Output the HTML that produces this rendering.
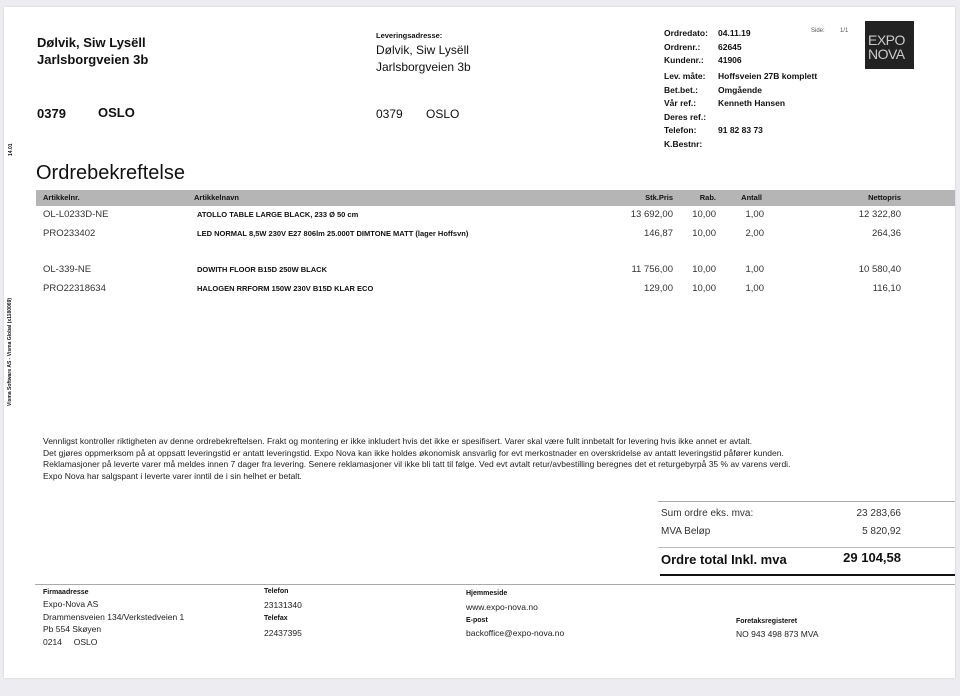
<!DOCTYPE html>
<html><head><meta charset="utf-8"><style>
*{margin:0;padding:0;box-sizing:border-box}
body{width:960px;height:696px;background:#ececf1;position:relative;overflow:hidden;font-family:"Liberation Sans",sans-serif;color:#111}
.pg{position:absolute;left:4px;top:7px;width:951px;height:671px;background:#fff;box-shadow:0 0 2px #ccc}
.t{position:absolute;white-space:nowrap;line-height:1}
.b{font-weight:bold}
.r{text-align:right}
.hl{position:absolute;height:1px;background:#999}
.n{position:absolute;white-space:nowrap;line-height:1;font-size:9.5px;color:#333;text-align:right}
</style></head><body>
<div class="pg"></div>
<div class="t b" style="left:37px;top:36px;font-size:13px">Dølvik, Siw Lysëll</div>
<div class="t b" style="left:37px;top:53px;font-size:13px">Jarlsborgveien 3b</div>
<div class="t b" style="left:37px;top:107px;font-size:13px">0379</div>
<div class="t b" style="left:98px;top:106px;font-size:13px">OSLO</div>
<div class="t b" style="left:376px;top:32px;font-size:7.5px">Leveringsadresse:</div>
<div class="t" style="left:376px;top:44px;font-size:12px">Dølvik, Siw Lysëll</div>
<div class="t" style="left:376px;top:61px;font-size:12px">Jarlsborgveien 3b</div>
<div class="t" style="left:376px;top:108px;font-size:12px">0379</div>
<div class="t" style="left:426px;top:108px;font-size:12px">OSLO</div>

<div class="t b" style="left:664px;top:27px;font-size:8.5px;line-height:13.5px">Ordredato:<br>Ordrenr.:<br>Kundenr.:</div>
<div class="t b" style="left:718px;top:27px;font-size:8.5px;line-height:13.5px">04.11.19<br>62645<br>41906</div>
<div class="t b" style="left:664px;top:70px;font-size:8.5px;line-height:13.5px">Lev. måte:<br>Bet.bet.:<br>Vår ref.:<br>Deres ref.:<br>Telefon:<br>K.Bestnr:</div>
<div class="t b" style="left:718px;top:70px;font-size:8.5px;line-height:13.5px">Hoffsveien 27B komplett<br>Omgående<br>Kenneth Hansen<br><br>91 82 83 73</div>
<div class="t" style="left:811px;top:28px;font-size:6px;color:#555">Side:</div>
<div class="t" style="left:840px;top:28px;font-size:6px;color:#555">1/1</div>
<div style="position:absolute;left:865px;top:21px;width:49px;height:48px;background:#222"></div>
<div class="t" style="left:868px;top:33px;font-size:14px;color:#ccc;letter-spacing:-0.5px;line-height:14px">EXPO<br>NOVA</div>

<div class="t b" style="left:9px;top:156px;font-size:5px;transform:rotate(-90deg);transform-origin:0 0">14.01</div>
<div class="t b" style="left:8px;top:406px;font-size:5px;transform:rotate(-90deg);transform-origin:0 0">Visma Software AS - Visma Global (x1180069)</div>

<div class="t" style="left:36px;top:163px;font-size:20px">Ordrebekreftelse</div>
<div style="position:absolute;left:36px;top:190px;width:919px;height:16px;background:#b5b5b5"></div>
<div class="t b" style="left:43px;top:194px;font-size:7.5px">Artikkelnr.</div>
<div class="t b" style="left:194px;top:194px;font-size:7.5px">Artikkelnavn</div>
<div class="t b r" style="left:573px;width:100px;top:194px;font-size:7.5px">Stk.Pris</div>
<div class="t b r" style="left:656px;width:60px;top:194px;font-size:7.5px">Rab.</div>
<div class="t b r" style="left:701px;width:61px;top:194px;font-size:7.5px">Antall</div>
<div class="t b r" style="left:801px;width:100px;top:194px;font-size:7.5px">Nettopris</div>

<div class="t" style="left:43px;top:210px;font-size:9.5px;color:#333">OL-L0233D-NE</div>
<div class="t b" style="left:197px;top:211px;font-size:7.5px">ATOLLO TABLE LARGE BLACK, 233 Ø 50 cm</div>
<div class="t" style="left:43px;top:229px;font-size:9.5px;color:#333">PRO233402</div>
<div class="t b" style="left:197px;top:230px;font-size:7.5px">LED NORMAL 8,5W 230V E27 806lm 25.000T DIMTONE MATT (lager Hoffsvn)</div>
<div class="t" style="left:43px;top:265px;font-size:9.5px;color:#333">OL-339-NE</div>
<div class="t b" style="left:197px;top:266px;font-size:7.5px">DOWITH FLOOR B15D 250W BLACK</div>
<div class="t" style="left:43px;top:284px;font-size:9.5px;color:#333">PRO22318634</div>
<div class="t b" style="left:197px;top:285px;font-size:7.5px">HALOGEN RRFORM 150W 230V B15D KLAR ECO</div>

<div class="n" style="left:573px;width:100px;top:210px">13 692,00</div>
<div class="n" style="left:656px;width:60px;top:210px">10,00</div>
<div class="n" style="left:704px;width:60px;top:210px">1,00</div>
<div class="n" style="left:801px;width:100px;top:210px">12 322,80</div>
<div class="n" style="left:573px;width:100px;top:229px">146,87</div>
<div class="n" style="left:656px;width:60px;top:229px">10,00</div>
<div class="n" style="left:704px;width:60px;top:229px">2,00</div>
<div class="n" style="left:801px;width:100px;top:229px">264,36</div>
<div class="n" style="left:573px;width:100px;top:265px">11 756,00</div>
<div class="n" style="left:656px;width:60px;top:265px">10,00</div>
<div class="n" style="left:704px;width:60px;top:265px">1,00</div>
<div class="n" style="left:801px;width:100px;top:265px">10 580,40</div>
<div class="n" style="left:573px;width:100px;top:284px">129,00</div>
<div class="n" style="left:656px;width:60px;top:284px">10,00</div>
<div class="n" style="left:704px;width:60px;top:284px">1,00</div>
<div class="n" style="left:801px;width:100px;top:284px">116,10</div>

<div class="t" style="left:43px;top:436px;font-size:8.5px;line-height:11.7px;color:#222">Vennligst kontroller riktigheten av denne ordrebekreftelsen. Frakt og montering er ikke inkludert hvis det ikke er spesifisert. Varer skal være fullt innbetalt for levering hvis ikke annet er avtalt.<br>Det gjøres oppmerksom på at oppsatt leveringstid er antatt leveringstid. Expo Nova kan ikke holdes økonomisk ansvarlig for evt merkostnader en overskridelse av antatt leveringstid påfører kunden.<br>Reklamasjoner på leverte varer må meldes innen 7 dager fra levering. Senere reklamasjoner vil ikke bli tatt til følge. Ved evt avtalt retur/avbestilling beregnes det et returgebyrpå 35 % av varens verdi.<br>Expo Nova har salgspant i leverte varer inntil de i sin helhet er betalt.</div>

<div class="hl" style="left:658px;top:501px;width:297px;background:#aaa"></div>
<div class="t" style="left:661px;top:509px;font-size:10px;color:#333">Sum ordre eks. mva:</div>
<div class="t r" style="left:800px;width:101px;top:509px;font-size:10px;color:#333">23 283,66</div>
<div class="t" style="left:661px;top:527px;font-size:10px;color:#333">MVA Beløp</div>
<div class="t r" style="left:800px;width:101px;top:527px;font-size:10px;color:#333">5 820,92</div>
<div class="hl" style="left:658px;top:547px;width:297px;background:#bbb"></div>
<div class="t b" style="left:661px;top:553px;font-size:13px">Ordre total Inkl. mva</div>
<div class="t b r" style="left:780px;width:121px;top:551px;font-size:13px">29 104,58</div>
<div class="hl" style="left:660px;top:574px;width:295px;height:2px;background:#111"></div>
<div class="hl" style="left:35px;top:584px;width:920px;background:#aaa"></div>

<div class="t b" style="left:43px;top:589px;font-size:7px">Firmaadresse</div>
<div class="t" style="left:43px;top:598px;font-size:8.5px;line-height:12.5px;color:#222">Expo-Nova AS<br>Drammensveien 134/Verkstedveien 1<br>Pb 554 Skøyen<br>0214&nbsp;&nbsp;&nbsp;&nbsp;&nbsp;OSLO</div>
<div class="t b" style="left:264px;top:588px;font-size:7px">Telefon</div>
<div class="t" style="left:264px;top:601px;font-size:8.5px;color:#222">23131340</div>
<div class="t b" style="left:264px;top:615px;font-size:7px">Telefax</div>
<div class="t" style="left:264px;top:629px;font-size:8.5px;color:#222">22437395</div>
<div class="t b" style="left:466px;top:590px;font-size:7px">Hjemmeside</div>
<div class="t" style="left:466px;top:603px;font-size:8.5px;color:#222">www.expo-nova.no</div>
<div class="t b" style="left:466px;top:617px;font-size:7px">E-post</div>
<div class="t" style="left:466px;top:629px;font-size:8.5px;color:#222">backoffice@expo-nova.no</div>
<div class="t b" style="left:736px;top:618px;font-size:7px">Foretaksregisteret</div>
<div class="t" style="left:736px;top:630px;font-size:8.5px;color:#222">NO 943 498 873 MVA</div>
</body></html>
